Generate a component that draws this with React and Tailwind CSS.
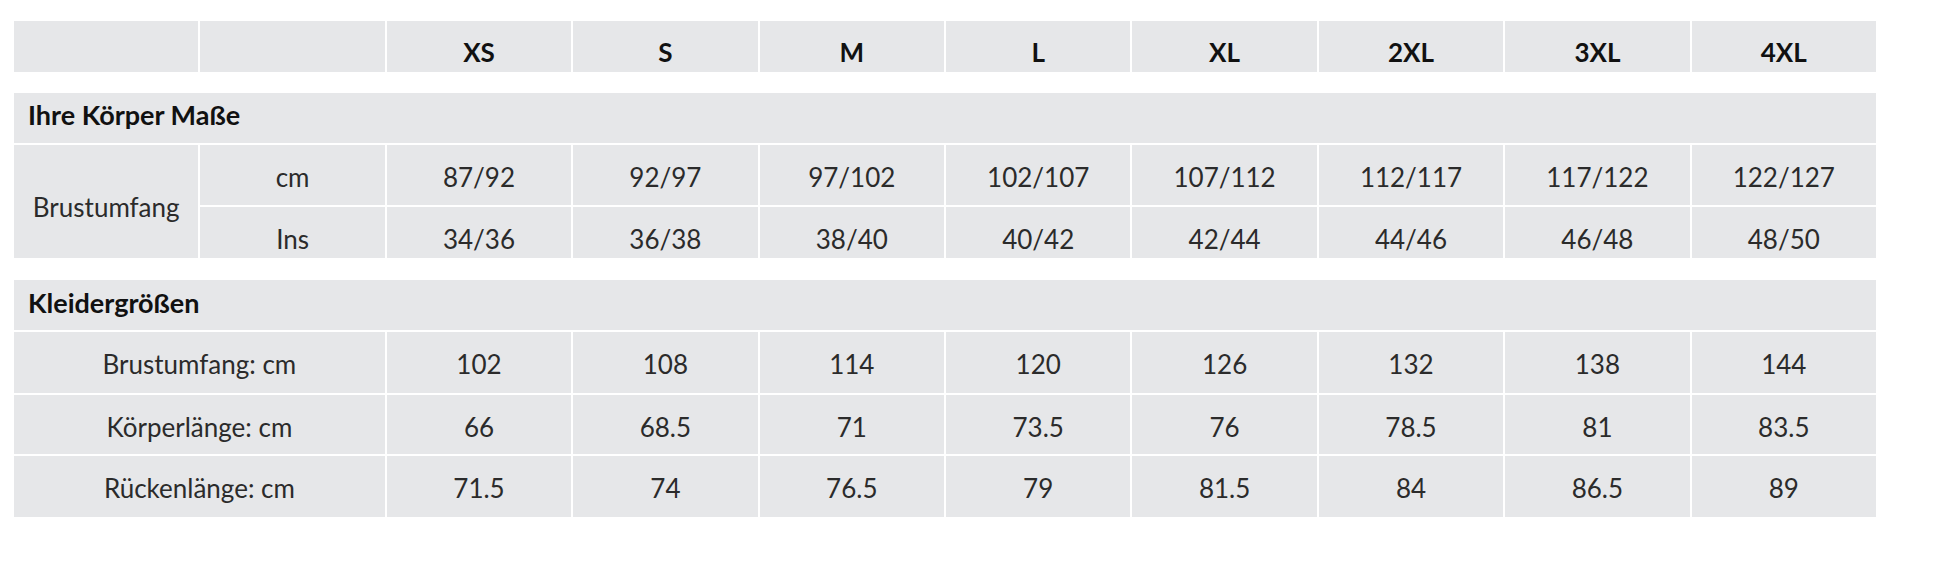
import React from "react";

const sizes = ["XS", "S", "M", "L", "XL", "2XL", "3XL", "4XL"];
const cm = ["87/92", "92/97", "97/102", "102/107", "107/112", "112/117", "117/122", "122/127"];
const ins = ["34/36", "36/38", "38/40", "40/42", "42/44", "44/46", "46/48", "48/50"];
const garment = [
  { label: "Brustumfang: cm", values: ["102", "108", "114", "120", "126", "132", "138", "144"] },
  { label: "Körperlänge: cm", values: ["66", "68.5", "71", "73.5", "76", "78.5", "81", "83.5"] },
  { label: "Rückenlänge: cm", values: ["71.5", "74", "76.5", "79", "81.5", "84", "86.5", "89"] },
];

function Cell({ children, className = "" }) {
  return (
    <div className={`flex items-center justify-center bg-[#e6e7e9] text-[#2b2b2b] ${className}`}>
      {children}
    </div>
  );
}

export default function App() {
  return (
    <div
      className="w-[1959px] h-[562px] bg-white pt-[21px] pl-[14px]"
      style={{ fontFamily: "Lato, 'Open Sans', sans-serif" }}
    >
      <div className="flex w-[1862px] flex-col text-[26px] leading-[1.2]">
        {/* header */}
        <div className="grid h-[51px] grid-cols-10 gap-[2px]">
          <Cell />
          <Cell />
          {sizes.map((s) => (
            <Cell key={s} className="pt-[12px] font-bold text-[#111]">
              {s}
            </Cell>
          ))}
        </div>

        {/* Ihre Körper Maße */}
        <div className="mt-[21px] grid grid-cols-10 grid-rows-[50px_60px_51px] gap-[2px]">
          <div className="col-span-10 flex items-center bg-[#e6e7e9] pb-[6px] pl-[14px] text-[27px] font-bold text-[#111]">
            Ihre Körper Maße
          </div>
          <Cell className="row-span-2 pt-[13px]">Brustumfang</Cell>
          <Cell className="pt-[6px]">cm</Cell>
          {cm.map((v, i) => (
            <Cell key={"cm" + i} className="pt-[6px]">
              {v}
            </Cell>
          ))}
          <Cell className="pt-[14px]">Ins</Cell>
          {ins.map((v, i) => (
            <Cell key={"ins" + i} className="pt-[14px]">
              {v}
            </Cell>
          ))}
        </div>

        {/* Kleidergrößen */}
        <div className="mt-[22px] grid grid-cols-10 grid-rows-[50px_61px_59px_61px] gap-[2px]">
          <div className="col-span-10 flex items-center bg-[#e6e7e9] pb-[4px] pl-[14px] text-[27px] font-bold text-[#111]">
            Kleidergrößen
          </div>
          {garment.map((row, r) => (
            <React.Fragment key={row.label}>
              <Cell className={`col-span-2 ${r === 1 ? "pt-[6px]" : "pt-[4px]"}`}>{row.label}</Cell>
              {row.values.map((v, i) => (
                <Cell key={row.label + i} className={r === 1 ? "pt-[6px]" : "pt-[4px]"}>
                  {v}
                </Cell>
              ))}
            </React.Fragment>
          ))}
        </div>
      </div>
    </div>
  );
}
